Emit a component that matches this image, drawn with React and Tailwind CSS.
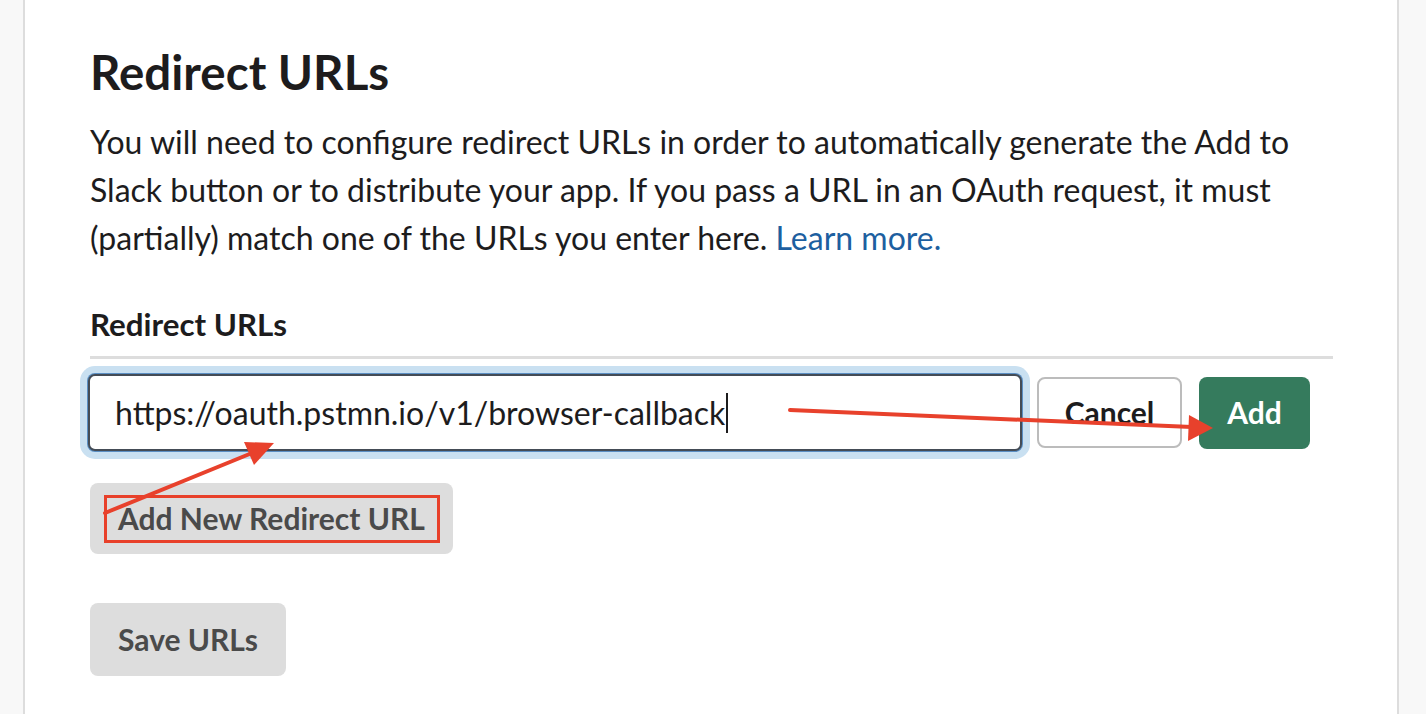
import React from "react";

export default function App() {
  return (
    <div
      className="relative w-[1426px] h-[714px] overflow-hidden bg-[#f8f8f8] flex"
      style={{ fontFamily: "Lato, 'Noto Sans', sans-serif" }}
    >
      <div className="w-[23px] shrink-0" />
      <div className="w-[1376px] shrink-0 bg-white border-l-2 border-r-2 border-[#dddddd] pl-[65px] pr-[64px] pt-[44px]">
        <h1 className="text-[47.5px] leading-[56px] font-bold text-[#1d1c1d]">Redirect URLs</h1>
        <p className="mt-[18px] text-[32px] leading-[48px] text-[#1d1c1d] whitespace-nowrap">
          You will need to configure redirect URLs in order to automatically generate the Add to
          <br />
          Slack button or to distribute your app. If you pass a URL in an OAuth request, it must
          <br />
          (partially) match one of the URLs you enter here. <span className="text-[#1d5fa0]">Learn more.</span>
        </p>
        <div className="mt-[44px] text-[31.3px] leading-[36px] font-bold text-[#1d1c1d]">Redirect URLs</div>
        <div className="mt-[14px] h-[3px] bg-[#dddddd]" />
        <div className="mt-[15px] flex items-center">
          <div className="ml-[-2px] w-[934px] h-[77px] rounded-[7px] border-2 border-[#444c56] bg-white flex items-center pl-[25px] shadow-[0_0_0_1px_#5b8fc4,0_0_0_8px_#c9e0f1]">
            <span className="text-[32px] text-[#1d1c1d]">https://oauth.pstmn.io/v1/browser-callback</span>
            <span className="ml-[1px] w-[2px] h-[40px] bg-[#1d1c1d]" />
          </div>
          <button className="ml-[15px] w-[145px] h-[71px] rounded-[8px] border-2 border-[#bcbcbc] bg-white text-[30px] font-bold text-[#1d1c1d]">
            Cancel
          </button>
          <button className="ml-[17px] w-[111px] h-[72px] rounded-[8px] bg-[#357b5d] text-[30px] font-bold text-white">
            Add
          </button>
        </div>
        <div className="mt-[32px]">
          <button className="relative h-[71px] px-[28px] rounded-[8px] bg-[#dddddd] text-[30px] font-bold text-[#4a4a4a]">
            Add New Redirect URL
            <span className="absolute left-[14px] right-[13px] top-[12px] bottom-[11px] border-[3px] border-[#e8402a]" />
          </button>
        </div>
        <div className="mt-[49px]">
          <button className="h-[73px] px-[28px] rounded-[8px] bg-[#dddddd] text-[30px] font-bold text-[#4a4a4a]">
            Save URLs
          </button>
        </div>
      </div>
      <svg className="absolute left-0 top-0 pointer-events-none" width="1426" height="714">
        <line x1="105" y1="513" x2="252" y2="453" stroke="#e8412c" strokeWidth="4" strokeLinecap="round" />
        <polygon points="274,443 244,442 254,465" fill="#e8412c" />
        <line x1="790" y1="410" x2="1192" y2="427" stroke="#e8412c" strokeWidth="4" strokeLinecap="round" />
        <polygon points="1213,428 1189,415 1188,441" fill="#e8412c" />
      </svg>
    </div>
  );
}
